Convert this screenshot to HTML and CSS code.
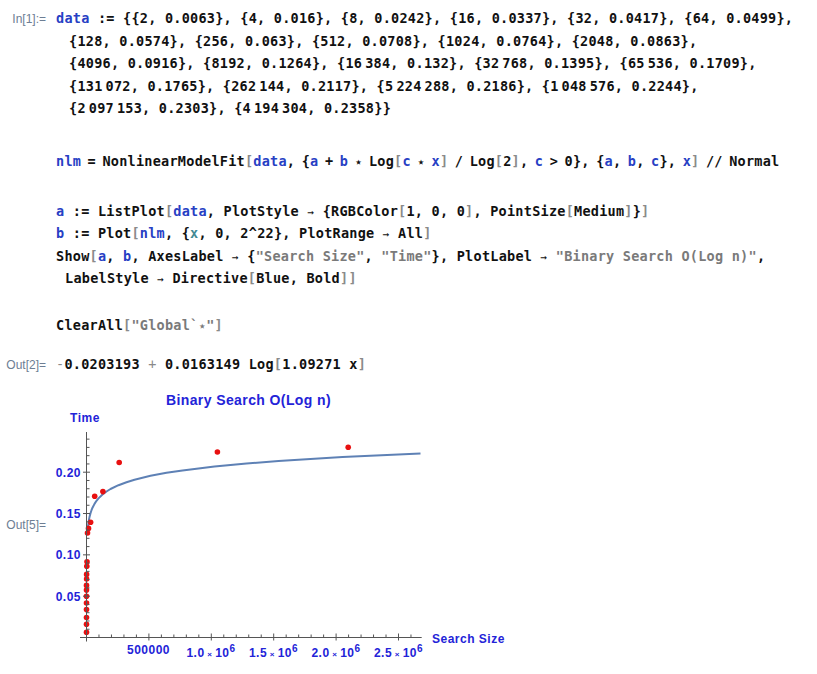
FILE: index.html
```html
<!DOCTYPE html>
<html>
<head>
<meta charset="utf-8">
<link rel="stylesheet" href="styles.css">
</head>
<body>
<div class="nb">
  <div class="cell">
    <div class="lbl">In[1]:=</div>
    <div class="code">
      <div class="ln"><span class="s">data</span> := {{2, 0.0063}, {4, 0.016}, {8, 0.0242}, {16, 0.0337}, {32, 0.0417}, {64, 0.0499},</div>
      <div class="ln ind">{128, 0.0574}, {256, 0.063}, {512, 0.0708}, {1024, 0.0764}, {2048, 0.0863},</div>
      <div class="ln ind">{4096, 0.0916}, {8192, 0.1264}, {16<span class="g"></span>384, 0.132}, {32<span class="g"></span>768, 0.1395}, {65<span class="g"></span>536, 0.1709},</div>
      <div class="ln ind">{131<span class="g"></span>072, 0.1765}, {262<span class="g"></span>144, 0.2117}, {5<span class="g"></span>224<span class="g"></span>288, 0.2186}, {1<span class="g"></span>048<span class="g"></span>576, 0.2244},</div>
      <div class="ln ind">{2<span class="g"></span>097<span class="g"></span>153, 0.2303}, {4<span class="g"></span>194<span class="g"></span>304, 0.2358}}</div>
      <div class="ln gap1 tight"><span class="s">nlm</span> = NonlinearModelFit<span class="br">[</span><span class="s">data</span>, {<span class="s">a</span> + <span class="s">b</span> <span class="st">⋆</span> Log<span class="br">[</span><span class="s">c</span> <span class="st">⋆</span> <span class="s">x</span><span class="br">]</span> / Log<span class="br">[</span>2<span class="br">]</span>, <span class="s">c</span> &gt; 0}, {<span class="s">a</span>, <span class="s">b</span>, <span class="s">c</span>}, <span class="s">x</span><span class="br">]</span> // Normal</div>
      <div class="ln gap2"><span class="s">a</span> := ListPlot<span class="br">[</span><span class="s">data</span>, PlotStyle <span class="ar">→</span> {RGBColor<span class="br">[</span>1, 0, 0<span class="br">]</span>, PointSize<span class="br">[</span>Medium<span class="br">]</span>}<span class="br">]</span></div>
      <div class="ln"><span class="s">b</span> := Plot<span class="br">[</span><span class="s">nlm</span>, {<span class="v">x</span>, 0, 2^22}, PlotRange <span class="ar">→</span> All<span class="br">]</span></div>
      <div class="ln">Show<span class="br">[</span><span class="s">a</span>, <span class="s">b</span>, AxesLabel <span class="ar">→</span> {<span class="str">"Search Size"</span>, <span class="str">"Time"</span>}, PlotLabel <span class="ar">→</span> <span class="str">"Binary Search O(Log n)"</span>,</div>
      <div class="ln ind2">LabelStyle <span class="ar">→</span> Directive<span class="br">[</span>Blue, Bold<span class="br">]</span><span class="br">]</span></div>
      <div class="ln gap3">ClearAll<span class="br">[</span><span class="str">"Global`<span class="st">⋆</span>"</span><span class="br">]</span></div>
    </div>
  </div>
  <div class="cell out2">
    <div class="lbl">Out[2]=</div>
    <div class="code"><div class="ln"><span class="op">-</span>0.0203193 <span class="op">+</span> 0.0163149 Log<span class="br">[</span>1.09271 x<span class="br">]</span></div></div>
  </div>
  <div class="cell out5">
    <div class="lbl lbl5">Out[5]=</div>
    <svg class="plot" width="460" height="285" viewBox="48 385 460 285" xmlns="http://www.w3.org/2000/svg">
      <text class="pl title" x="248.5" y="404.5" text-anchor="middle">Binary Search O(Log n)</text>
      <text class="pl" x="85" y="422" text-anchor="middle">Time</text>
      <text class="pl" x="432" y="642.5">Search Size</text>
      <g class="pl" text-anchor="end">
        <text x="81" y="476.6">0.20</text>
        <text x="81" y="517.8">0.15</text>
        <text x="81" y="559.2">0.10</text>
        <text x="81" y="600.5">0.05</text>
      </g>
      <g class="pl" text-anchor="middle">
        <text x="148.5" y="654.3">500000</text>
        <text x="211" y="656.7">1.0<tspan class="tm"> × </tspan>10<tspan class="sup" dy="-5">6</tspan></text>
        <text x="273.5" y="656.7">1.5<tspan class="tm"> × </tspan>10<tspan class="sup" dy="-5">6</tspan></text>
        <text x="336" y="656.7">2.0<tspan class="tm"> × </tspan>10<tspan class="sup" dy="-5">6</tspan></text>
        <text x="398.5" y="656.7">2.5<tspan class="tm"> × </tspan>10<tspan class="sup" dy="-5">6</tspan></text>
      </g>
      <path class="curve" d="M87.3 534.9 L87.5 531.9 L88 526.4 L88.5 522.6 L89 519.5 L89.5 517.1 L90.5 513.2 L91.5 510.2 L92.5 507.7 L94.5 503.9 L96.5 500.8 L98.5 498.4 L102.5 494.5 L106.5 491.5 L110.5 489 L118.5 485.2 L126.5 482.2 L134.5 479.7 L150.5 475.8 L166.5 472.8 L182.5 470.4 L214.5 466.5 L246.5 463.5 L278.5 461 L310.5 458.9 L342.5 457.1 L420.5 453.5"/>
      <g class="pts">
        <circle cx="86.5" cy="632.3" r="2.8"/>
        <circle cx="86.5" cy="624.3" r="2.8"/>
        <circle cx="86.5" cy="617.5" r="2.8"/>
        <circle cx="86.5" cy="609.6" r="2.8"/>
        <circle cx="86.5" cy="603" r="2.8"/>
        <circle cx="86.5" cy="596.3" r="2.8"/>
        <circle cx="86.5" cy="590.1" r="2.8"/>
        <circle cx="86.5" cy="585.4" r="2.8"/>
        <circle cx="86.6" cy="579" r="2.8"/>
        <circle cx="86.6" cy="574.4" r="2.8"/>
        <circle cx="86.8" cy="566.2" r="2.8"/>
        <circle cx="87" cy="561.8" r="2.8"/>
        <circle cx="87.5" cy="533" r="2.8"/>
        <circle cx="88.5" cy="528.4" r="2.8"/>
        <circle cx="90.6" cy="522.2" r="2.8"/>
        <circle cx="94.7" cy="496.3" r="2.8"/>
        <circle cx="102.9" cy="491.6" r="2.8"/>
        <circle cx="119.2" cy="462.5" r="2.8"/>
        <circle cx="217.4" cy="452" r="2.8"/>
        <circle cx="348.2" cy="447.2" r="2.8"/>
      </g>
      <path class="axis" d="M86.5 432 V641.5 M80 637.5 H421.7"/>
      <path class="axis" d="M86.5 629.24h3 M86.5 620.97h3 M86.5 612.71h3 M86.5 604.44h3 M83 596.18h7 M86.5 587.91h3 M86.5 579.65h3 M86.5 571.38h3 M86.5 563.12h3 M83 554.85h7 M86.5 546.59h3 M86.5 538.32h3 M86.5 530.06h3 M86.5 521.79h3 M83 513.53h7 M86.5 505.26h3 M86.5 497h3 M86.5 488.73h3 M86.5 480.47h3 M83 472.2h7 M86.5 463.94h3 M86.5 455.67h3 M86.5 447.41h3 M86.5 439.14h3"/>
      <path class="axis" d="M98.98 637.5v-3 M111.46 637.5v-3 M123.94 637.5v-3 M136.42 637.5v-3 M148.9 640.5v-7 M161.38 637.5v-3 M173.86 637.5v-3 M186.34 637.5v-3 M198.82 637.5v-3 M211.3 640.5v-7 M223.78 637.5v-3 M236.26 637.5v-3 M248.74 637.5v-3 M261.22 637.5v-3 M273.7 640.5v-7 M286.18 637.5v-3 M298.66 637.5v-3 M311.14 637.5v-3 M323.62 637.5v-3 M336.1 640.5v-7 M348.58 637.5v-3 M361.06 637.5v-3 M373.54 637.5v-3 M386.02 637.5v-3 M398.5 640.5v-7 M410.98 637.5v-3"/>
    </svg>
  </div>
</div>
</body>
</html>
```
FILE: styles.css
```css
html, body {
  margin: 0;
  padding: 0;
  background: #ffffff;
}

.nb {
  padding-top: 7px;
  width: 817px;
}

.cell {
  display: flex;
  align-items: baseline;
  gap: 8px;
}

.lbl {
  width: 46px;
  padding-right: 2px;
  text-align: right;
  font-family: "Liberation Sans", Arial, sans-serif;
  font-size: 12px;
  line-height: 22.6px;
  color: #6d7e94;
  flex: none;
}

.code {
  font-family: "DejaVu Sans Mono", monospace;
  font-weight: bold;
  font-size: 13.5px;
  letter-spacing: 0.25px;
  line-height: 22.6px;
  color: #111;
}

.ln { white-space: pre; }
.tight { word-spacing: -1.9px; }

.ind { padding-left: 13px; }
.ind2 { padding-left: 9px; }
.gap1 { margin-top: 30px; }
.gap2 { margin-top: 27px; }
.gap3 { margin-top: 24px; }

.s { color: #2740c4; }
.v { color: #438a94; }
.str { color: #7a7a7a; }
.br { color: #8a8a8a; }
.st { font-family: "DejaVu Sans", sans-serif; font-size: 12px; line-height: 1; }
.ar { font-weight: normal; font-size: 11px; line-height: 1; }
.op { color: #8a8a8a; font-weight: normal; line-height: 1; }
.g { display: inline-block; width: 3px; line-height: 1; }

.out2 { margin-top: 16px; }

.out5 {
  margin-top: 9px;
  align-items: flex-start;
  gap: 0;
}

.lbl5 { margin-top: 129px; }

.plot { display: block; flex: none; }

.pl {
  font-family: "Liberation Sans", Arial, sans-serif;
  font-weight: bold;
  font-size: 12px;
  letter-spacing: 0.5px;
  fill: #2323d8;
}

.title { font-size: 14px; letter-spacing: 0.4px; }
.tm { font-size: 8px; }
.sup { font-size: 10px; }

.curve {
  fill: none;
  stroke: #5e81b5;
  stroke-width: 2;
  stroke-linejoin: round;
}

.pts circle { fill: #e81010; }

.axis {
  fill: none;
  stroke: #555;
  stroke-width: 1;
}
```
